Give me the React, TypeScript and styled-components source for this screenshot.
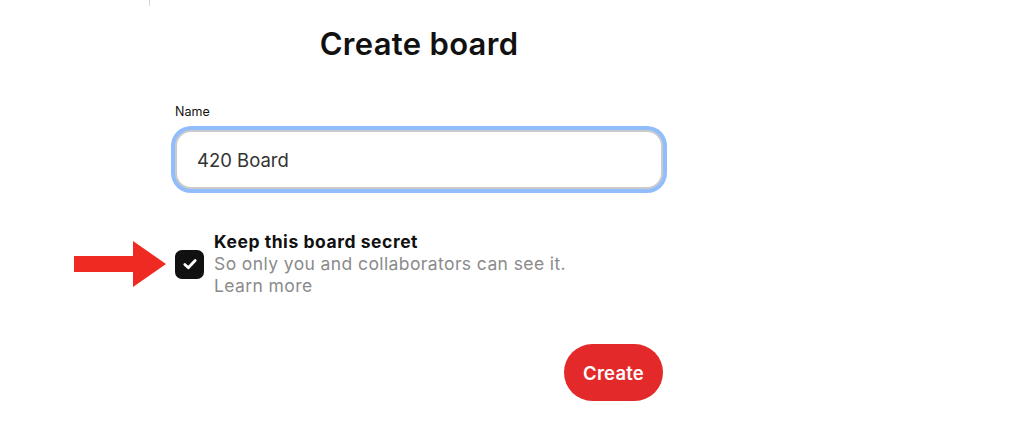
import React from "react";
import styled, { createGlobalStyle } from "styled-components";

const Global = createGlobalStyle`
  html, body { margin: 0; padding: 0; background: #ffffff; }
  body { font-family: Inter, "Liberation Sans", Arial, sans-serif; color: #111111; }
  * { box-sizing: border-box; }
`;

const Page = styled.div`
  position: relative;
  width: 1024px;
  height: 430px;
  overflow: hidden;
  padding: 24px 0 0 175px;
`;

const Tick = styled.div`
  position: absolute;
  left: 149px;
  top: 0;
  width: 1px;
  height: 6px;
  background: #d6d6d6;
`;

const Form = styled.div`
  width: 488px;
  display: flex;
  flex-direction: column;
`;

const Title = styled.h1`
  margin: 0;
  text-align: center;
  font-size: 31px;
  line-height: 40px;
  font-weight: 600;
  color: #111111;
  letter-spacing: 0.3px;
`;

const Label = styled.label`
  margin-top: 40px;
  font-size: 12.5px;
  line-height: 16px;
  color: #111111;
`;

const Input = styled.input`
  margin-top: 10px;
  height: 59px;
  width: 100%;
  border: 2px solid #cbcbcb;
  border-radius: 16px;
  box-shadow: 0 0 0 4px #92bdfd;
  padding: 0 20px;
  font-family: inherit;
  font-size: 18.5px;
  color: #333333;
  outline: none;
  background: #fff;
`;

const CheckRow = styled.div`
  position: relative;
  margin-top: 42px;
  display: flex;
  align-items: center;
  gap: 10px;
`;

const Box = styled.div`
  width: 29px;
  height: 29px;
  border-radius: 7px;
  background: #111111;
  display: flex;
  align-items: center;
  justify-content: center;
  flex-shrink: 0;
`;

const Arrow = styled.svg`
  position: absolute;
  right: calc(100% + 9px);
  top: 50%;
  transform: translateY(-50%);
`;

const Texts = styled.div`
  display: flex;
  flex-direction: column;
  font-size: 17.5px;
  line-height: 22px;
  letter-spacing: 0.4px;
`;

const Strong = styled.span`
  font-weight: 700;
  color: #111111;
  letter-spacing: 0.55px;
`;

const Muted = styled.span`
  color: #8b8b8b;
`;

const Actions = styled.div`
  margin-top: 47px;
  display: flex;
  justify-content: flex-end;
`;

const Button = styled.button`
  width: 99px;
  height: 57px;
  border: none;
  border-radius: 29px;
  background: #e3292a;
  color: #ffffff;
  font-family: inherit;
  font-size: 18.5px;
  font-weight: 600;
  letter-spacing: 0.2px;
`;

export default function App() {
  return (
    <>
      <Global />
      <Page>
        <Tick />
        <Form>
          <Title>Create board</Title>
          <Label>Name</Label>
          <Input defaultValue="420 Board" />
          <CheckRow>
            <Arrow width="92" height="48" viewBox="0 0 92 48">
              <polygon points="0,16 59,16 59,1 92,24 59,47 59,32 0,32" fill="#ee2a22" />
            </Arrow>
            <Box>
              <svg width="18" height="18" viewBox="0 0 16 16">
                <path d="M3.4 8.4 L6.5 11.3 L12.6 4.9" fill="none" stroke="#fff" strokeWidth="2.5" strokeLinecap="round" strokeLinejoin="round" />
              </svg>
            </Box>
            <Texts>
              <Strong>Keep this board secret</Strong>
              <Muted>So only you and collaborators can see it.</Muted>
              <Muted>Learn more</Muted>
            </Texts>
          </CheckRow>
          <Actions>
            <Button>Create</Button>
          </Actions>
        </Form>
      </Page>
    </>
  );
}
